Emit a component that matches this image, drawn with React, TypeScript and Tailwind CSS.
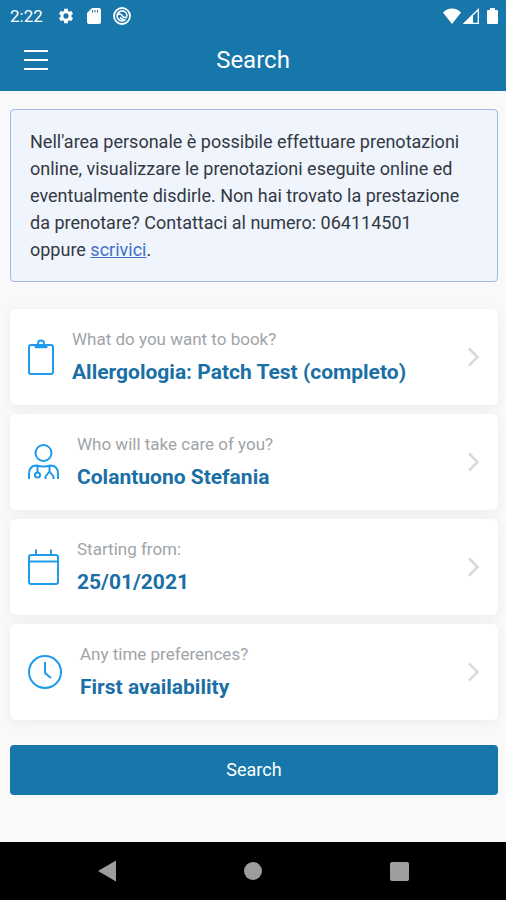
import type { ReactNode } from "react";
import { MdSettings } from "react-icons/md";

interface OptionCardProps {
  icon: ReactNode;
  label: string;
  value: string;
}

const ClipboardIcon = () => (
  <svg width="26" height="36" viewBox="0 0 26 36" fill="none" stroke="currentColor" strokeWidth="2">
    <rect x="1" y="6" width="24" height="29" rx="2" />
    <path d="M7.5 6h11v2.200h-11z" fill="currentColor" strokeLinejoin="round" />
    <path d="M10 6V4.500a3 3 0 0 1 6 0V6" />
  </svg>
);

const DoctorIcon = () => (
  <svg width="31" height="36" viewBox="0 0 31 36" fill="none" stroke="currentColor" strokeWidth="2">
    <circle cx="15.5" cy="9" r="8" />
    <path d="M1 35v-5c0-5 2.500-8.500 7.500-8.500q7 2 14 0c5 0 7.500 3.500 7.500 8.500v5" />
    <path d="M9.500 21.500V28M21.500 21.500V27M17.500 35v-2.500l4-5 4 5V35" strokeLinejoin="round" />
    <circle cx="9.500" cy="31" r="2.600" />
  </svg>
);

const CalendarIcon = () => (
  <svg width="31" height="36" viewBox="0 0 31 36" fill="none" stroke="currentColor" strokeWidth="2">
    <rect x="1" y="6" width="29" height="29" rx="2" />
    <path d="M1 12.500h29M8 0.500V6M23 0.500V6" />
  </svg>
);

const ClockIcon = () => (
  <svg width="34" height="34" viewBox="0 0 34 34" fill="none" stroke="currentColor" strokeWidth="2">
    <circle cx="17" cy="17" r="16" />
    <path d="M17 7v11l6 5" />
  </svg>
);

const OptionCard = ({ icon, label, value }: OptionCardProps) => {
  return (
    <button
      type="button"
      className="flex h-24 w-full items-center rounded-md bg-white pl-[18px] pr-[18px] text-left shadow-[0_2px_12px_rgba(0,0,0,0.06)]"
    >
      <span className="shrink-0 text-[#1e9bec]">{icon}</span>
      <span className="ml-[18px] flex flex-1 flex-col">
        <span className="text-[17px] leading-[30px] text-[#a0a4a8]">{label}</span>
        <span className="text-[21px] leading-9 font-bold text-[#1a6fa5]">{value}</span>
      </span>
      <svg width="13" height="20" viewBox="0 0 13 20" fill="none" stroke="#d9d9d9" strokeWidth="2.500">
        <path d="M2 1.500L10.500 10L2 18.500" />
      </svg>
    </button>
  );
};

const StatusBar = () => (
  <div className="flex h-8 items-center justify-between pl-2.5 pr-2">
    <div className="flex items-center">
      <span className="text-[17px] leading-6">2:22</span>
      <MdSettings className="ml-3.5 size-[18px]" />
      <svg className="ml-3" width="14" height="16" viewBox="0 0 14 16">
        <path d="M5 0h7a2 2 0 0 1 2 2v12a2 2 0 0 1-2 2H2a2 2 0 0 1-2-2V5z" fill="currentColor" />
        <path d="M5.500 2v2.500M8 2v2.500M10.500 2v2.500" stroke="#1776aa" strokeWidth="1" />
      </svg>
      <svg className="ml-3" width="18" height="18" viewBox="0 0 18 18" fill="none" stroke="currentColor">
        <circle cx="9" cy="9" r="8" strokeWidth="1.800" />
        <path d="M12.500 12.500A5 5 0 1 1 14 9.500M4.500 8c2-2 3.500-1 4.500.5s2.500 3 5 1.500M7 10.500l4.500 3" strokeWidth="1.600" />
      </svg>
    </div>
    <div className="flex items-center">
      <svg width="18" height="16" viewBox="0 0 18 16">
        <path d="M9 16L0 4.500C5-.8 13-.8 18 4.500z" fill="currentColor" />
      </svg>
      <svg className="ml-0.5" width="16" height="16" viewBox="0 0 16 16">
        <path d="M1.500 15.300L15.300 1.500v13.800z" fill="none" stroke="currentColor" strokeWidth="1.300" />
        <path d="M0 16L10 6v10z" fill="currentColor" />
      </svg>
      <svg className="ml-2" width="11" height="16" viewBox="0 0 11 16">
        <path d="M3 0h5v2h2a1 1 0 0 1 1 1v12a1 1 0 0 1-1 1H1a1 1 0 0 1-1-1V3a1 1 0 0 1 1-1h2z" fill="currentColor" />
      </svg>
    </div>
  </div>
);

const App = () => {
  return (
    <div className="flex min-h-screen flex-col bg-[#f9f9f9] font-[Roboto,sans-serif]">
      <header className="bg-[#1776aa] text-white">
        <StatusBar />
        <div className="grid h-[59px] grid-cols-[1fr_auto_1fr] items-center px-6 pb-1">
          <button type="button" aria-label="Menu" className="flex w-6 flex-col gap-[7px]">
            <span className="h-0.5 bg-white" />
            <span className="h-0.5 bg-white" />
            <span className="h-0.5 bg-white" />
          </button>
          <h1 className="text-2xl">Search</h1>
        </div>
      </header>

      <main className="flex flex-1 flex-col pt-[18px] pr-2 pb-10 pl-2.5">
        <p className="rounded border border-[#9dbbe6] bg-[#eff4fd] py-[18px] pr-8 pl-[19px] text-lg leading-[27px] text-[#333943]">
          Nell'area personale è possibile effettuare prenotazioni online, visualizzare le prenotazioni eseguite online ed
          eventualmente disdirle. Non hai trovato la prestazione da prenotare? Contattaci al numero: 064114501 oppure{" "}
          <a href="#scrivici" className="text-[#4270c8] underline">scrivici</a>.
        </p>

        <div className="mt-[27px] flex flex-col gap-[9px]">
          <OptionCard icon={<ClipboardIcon />} label="What do you want to book?" value="Allergologia: Patch Test (completo)" />
          <OptionCard icon={<DoctorIcon />} label="Who will take care of you?" value="Colantuono Stefania" />
          <OptionCard icon={<CalendarIcon />} label="Starting from:" value="25/01/2021" />
          <OptionCard icon={<ClockIcon />} label="Any time preferences?" value="First availability" />
        </div>

        <button type="button" className="mt-[25px] h-[50px] rounded bg-[#1776aa] text-lg text-white">
          Search
        </button>
      </main>

      <nav className="grid h-[58px] grid-cols-[1fr_auto_1fr] items-center bg-black text-[#9d9d9d]">
        <button type="button" aria-label="Back" className="mr-32 justify-self-end">
          <svg width="18" height="22" viewBox="0 0 18 22" fill="currentColor">
            <path d="M0 11L18 0.500v21z" />
          </svg>
        </button>
        <button type="button" aria-label="Home" className="size-[18px] rounded-full bg-current" />
        <button type="button" aria-label="Recent apps" className="ml-32 size-[19px] rounded-xs bg-current" />
      </nav>
    </div>
  );
};

export default App;
